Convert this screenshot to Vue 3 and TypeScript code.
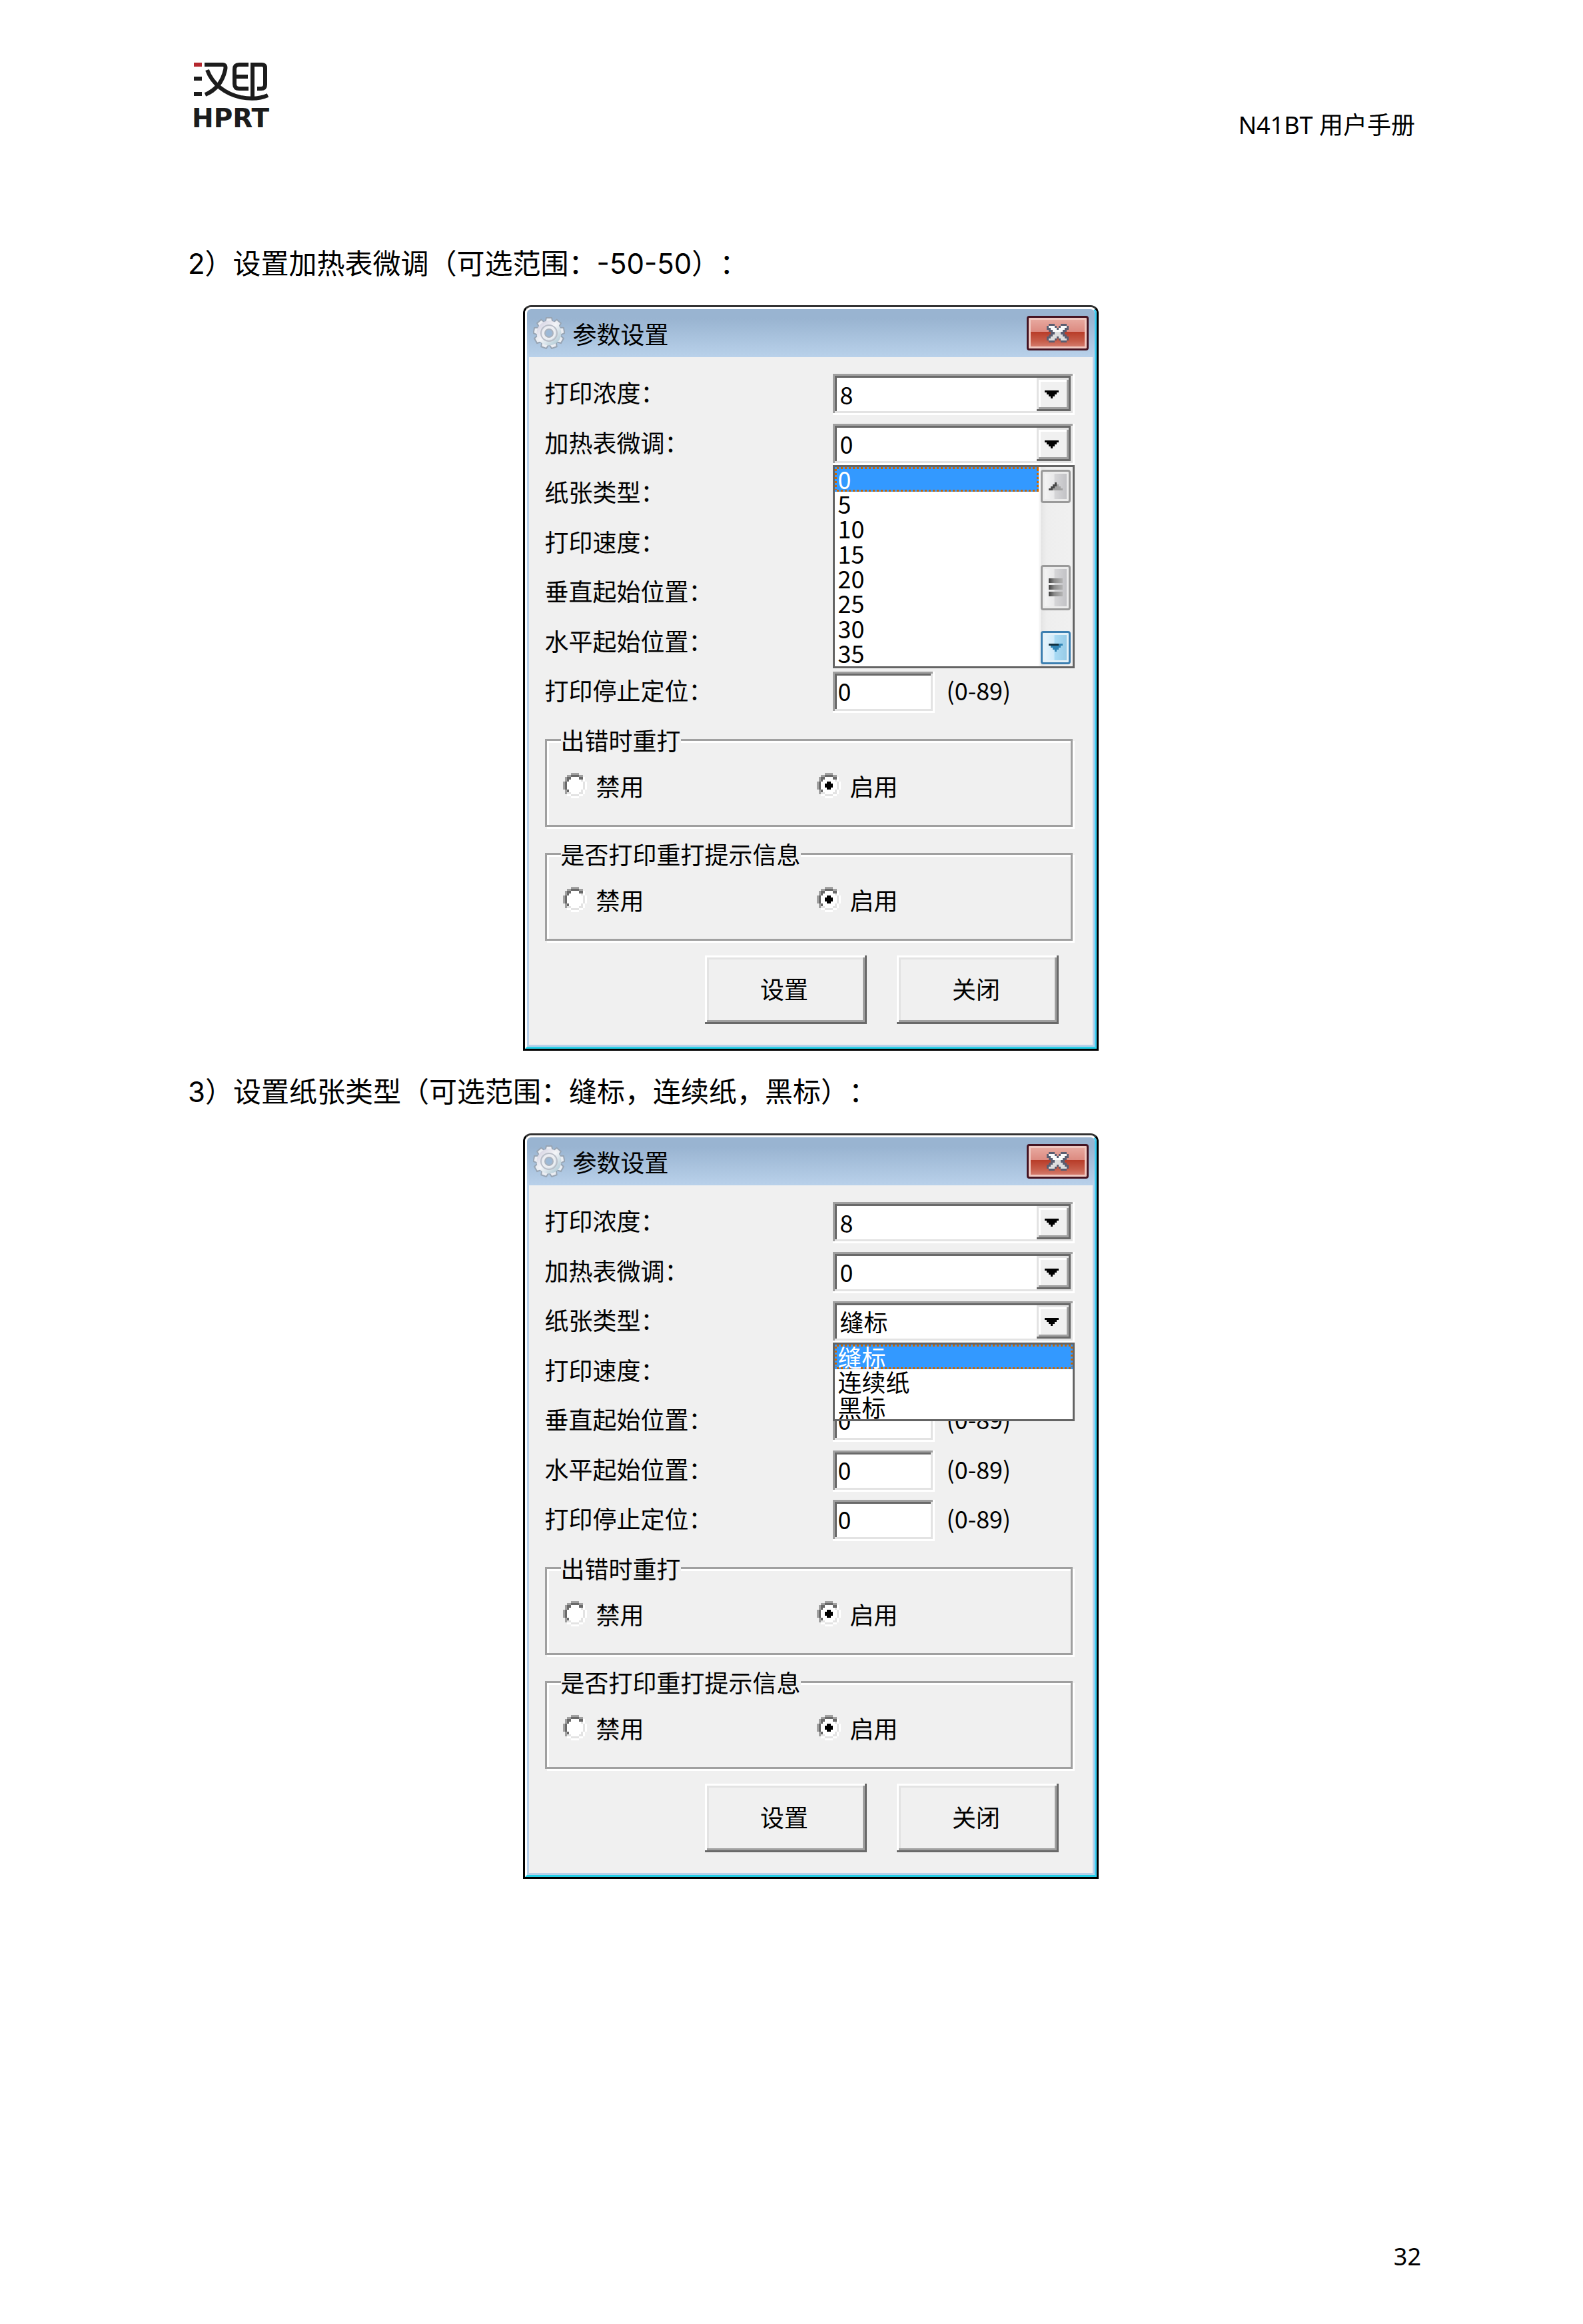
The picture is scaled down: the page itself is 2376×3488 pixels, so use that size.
<script setup lang="ts">
import { reactive } from 'vue'

interface Field {
  key: string
  label: string
  kind: 'select' | 'input'
  value: string
  options?: string[]
  open?: boolean
  covered?: boolean
  scroll?: boolean
}

interface Group {
  key: string
  legend: string
  value: string
}

interface Dialog {
  id: string
  heading: string
  fields: Field[]
  groups: Group[]
}

interface Cell {
  x: number
  y: number
  fill: string
}

const offsets = ['0', '5', '10', '15', '20', '25', '30', '35']
const papers = ['缝标', '连续纸', '黑标']

// Fields that lie entirely under an open list are hidden while it is open.
function makeDialog(id: string, heading: string, openKey: string, covered: string[]): Dialog {
  const fields: Field[] = [
    { key: 'density', label: '打印浓度：', kind: 'select', value: '8', options: ['8'] },
    { key: 'heat', label: '加热表微调：', kind: 'select', value: '0', options: offsets, scroll: true },
    { key: 'paper', label: '纸张类型：', kind: 'select', value: '缝标', options: papers },
    { key: 'speed', label: '打印速度：', kind: 'select', value: '', options: [] },
    { key: 'vertical', label: '垂直起始位置：', kind: 'input', value: '0' },
    { key: 'horizontal', label: '水平起始位置：', kind: 'input', value: '0' },
    { key: 'stop', label: '打印停止定位：', kind: 'input', value: '0' },
  ]
  return {
    id,
    heading,
    fields: fields.map((f) => ({ ...f, open: f.key === openKey, covered: covered.includes(f.key) })),
    groups: [
      { key: 'reprint', legend: '出错时重打', value: '启用' },
      { key: 'notice', legend: '是否打印重打提示信息', value: '启用' },
    ],
  }
}

const dialogs = reactive<Dialog[]>([
  makeDialog('d2', '2）设置加热表微调（可选范围：-50-50）：', 'heat', ['paper', 'speed', 'vertical', 'horizontal']),
  makeDialog('d3', '3）设置纸张类型（可选范围：缝标，连续纸，黑标）：', 'paper', ['speed']),
])

function toCells(rows: string[], palette: Record<string, string>): Cell[] {
  return rows.flatMap((row, y) =>
    [...row].flatMap((ch, x) => (palette[ch] ? [{ x, y, fill: palette[ch] }] : [])),
  )
}

const ring = toCells(
  [
    '    aaaa    ',
    '  aaddddaa  ',
    ' addwwwwddf ',
    ' adwwwwwwef ',
    'adwwwwwwwwef',
    'adwwwwwwwwef',
    'adwwwwwwwwef',
    'adwwwwwwwwef',
    ' adwwwwwwef ',
    ' aeewwwweef ',
    '  ffeeeeff  ',
    '    ffff    ',
  ],
  { a: '#a0a0a0', d: '#696969', w: '#ffffff', e: '#e3e3e3', f: '#ffffff' },
)

const cross = toCells(
  [
    ' ooo   ooo ',
    'owwwo owwwo',
    'oowwwowwwoo',
    ' oowwwwwoo ',
    '  oovvvoo  ',
    ' oovvvvvoo ',
    'oovvvovvvoo',
    'ovvvo ovvvo',
    ' ooo   ooo ',
  ],
  { o: '#5a5d70', w: '#fafafa', v: '#dedede' },
)

const teeth = Array.from({ length: 9 }, (_, i) => i * 40)
</script>

<template>
  <div class="page">
    <header class="top">
      <div class="brand">
        <svg class="mark" viewBox="0 0 118 62" aria-hidden="true">
          <rect x="2" y="1" width="12" height="6" fill="#b5282e" />
          <rect x="2" y="22" width="12" height="6" fill="#1c1c1c" />
          <rect x="2" y="45" width="12" height="6" fill="#1c1c1c" />
          <g fill="none" stroke="#1c1c1c" stroke-width="6">
            <path d="M18 4H45Q51 4 49 12C45 30 36 42 19 49" />
            <path d="M22 12C30 34 50 48 72 53C88 56 102 55 113 50" />
            <path d="M84 4H70Q63 4 63 11V33Q63 40 70 40H84M63 22H83" />
            <path d="M90 54V4H104Q109 4 109 9V34Q109 40 103 40H97" />
          </g>
        </svg>
        <span class="name">HPRT</span>
      </div>
      <span class="manual">N41BT 用户手册</span>
    </header>

    <main class="content">
      <section v-for="d in dialogs" :key="d.id" class="step">
        <h2 class="heading">{{ d.heading }}</h2>

        <div class="window" role="dialog" aria-label="参数设置">
          <div class="frame">
            <div class="titlebar">
              <svg class="gear" viewBox="-24 -24 48 48" aria-hidden="true">
                <defs>
                  <linearGradient :id="d.id + '-metal'" x1="0" y1="0" x2="1" y2="1">
                    <stop offset="0" stop-color="#d8d6e4" />
                    <stop offset="0.45" stop-color="#f4f5f8" />
                    <stop offset="1" stop-color="#b4cdd8" />
                  </linearGradient>
                </defs>
                <g stroke="#98a5b4" stroke-width="2">
                  <path
                    v-for="a in teeth"
                    :key="a"
                    d="M-6 -15L-4 -23H4L6 -15Z"
                    :transform="`rotate(${a})`"
                    fill="#eceef3"
                  />
                </g>
                <circle r="14" fill="none" :stroke="`url(#${d.id}-metal)`" stroke-width="9" />
                <circle r="12" fill="none" stroke="#b9bec8" stroke-width="2" />
                <circle r="8" fill="none" stroke="#eceef2" stroke-width="4" />
                <circle r="6" fill="#9db9d6" stroke="#a9b2be" stroke-width="2" />
              </svg>
              <span class="caption">参数设置</span>
              <button class="close" type="button" aria-label="关闭窗口">
                <svg viewBox="0 0 11 9" preserveAspectRatio="none" shape-rendering="crispEdges">
                  <rect v-for="(c, i) in cross" :key="i" :x="c.x" :y="c.y" width="1" height="1" :fill="c.fill" />
                </svg>
              </button>
            </div>

            <form class="body" @submit.prevent>
              <div class="rows">
                <div v-for="f in d.fields" :key="f.key" class="row">
                  <label class="label" :for="d.id + f.key">{{ f.label }}</label>

                  <div v-if="f.kind === 'select'" class="field" :class="{ covered: f.covered }">
                    <select :id="d.id + f.key" v-model="f.value" class="select sunken">
                      <option v-for="o in f.options" :key="o" :value="o">{{ o }}</option>
                    </select>
                    <span class="arrow">
                      <svg viewBox="0 0 7 4" preserveAspectRatio="none" shape-rendering="crispEdges">
                        <path d="M0 0H7V1H6V2H5V3H4V4H3V3H2V2H1V1H0Z" />
                      </svg>
                    </span>

                    <div v-if="f.open" class="popup">
                      <ul class="list" :class="{ tall: f.scroll }" role="listbox">
                        <li
                          v-for="o in f.options"
                          :key="o"
                          class="item"
                          :class="{ selected: o === f.value }"
                          role="option"
                          :aria-selected="o === f.value"
                          @click="f.value = o"
                        >{{ o }}</li>
                      </ul>
                      <div v-if="f.scroll" class="scrollbar" aria-hidden="true">
                        <span class="knob up">
                          <svg viewBox="0 0 7 4" shape-rendering="crispEdges">
                            <path d="M3 0H4V1H5V2H6V3H7V4H0V3H1V2H2V1H3Z" fill="#a2a2a2" />
                            <path d="M3 0H4V2H3V3H2V4H0V3H1V2H2V1H3Z" fill="#484848" />
                          </svg>
                        </span>
                        <span class="knob thumb"><i></i><i></i><i></i></span>
                        <span class="knob down">
                          <svg viewBox="0 0 7 4" shape-rendering="crispEdges">
                            <path d="M0 0H7V1H6V2H5V3H4V4H3V3H2V2H1V1H0Z" fill="#2f83b4" />
                            <path d="M0 0H5V1H0Z" fill="#12303f" />
                          </svg>
                        </span>
                      </div>
                    </div>
                  </div>

                  <div v-else class="field" :class="{ covered: f.covered }">
                    <input :id="d.id + f.key" v-model="f.value" class="text sunken" type="text" />
                    <span class="hint">(0-89)</span>
                  </div>
                </div>
              </div>

              <fieldset v-for="g in d.groups" :key="g.key" class="group">
                <legend>{{ g.legend }}</legend>
                <div class="choices">
                  <label v-for="c in ['禁用', '启用']" :key="c" class="choice">
                    <input v-model="g.value" type="radio" :name="d.id + g.key" :value="c" />
                    <svg viewBox="0 0 12 12" preserveAspectRatio="none" shape-rendering="crispEdges" aria-hidden="true">
                      <rect v-for="(p, i) in ring" :key="i" :x="p.x" :y="p.y" width="1" height="1" :fill="p.fill" />
                      <path v-if="g.value === c" d="M5 4H7V5H8V7H7V8H5V7H4V5H5Z" />
                    </svg>
                    <span>{{ c }}</span>
                  </label>
                </div>
              </fieldset>

              <div class="actions">
                <button class="push" type="submit">设置</button>
                <button class="push" type="button">关闭</button>
              </div>
            </form>
          </div>
        </div>
      </section>
    </main>

    <footer class="bottom">32</footer>
  </div>
</template>

<style>
body {
  margin: 0;
  background: #ffffff;
}
</style>

<style scoped>
* {
  box-sizing: border-box;
}

.page {
  display: flex;
  flex-direction: column;
  min-height: 100vh;
  color: #000000;
  font-family: 'Noto Sans', 'Noto Sans CJK SC', sans-serif;
  font-size: 36px;
}

.top {
  display: flex;
  justify-content: space-between;
  align-items: flex-end;
  padding: 93px 252px 0 288px;
}

.brand {
  display: flex;
  flex-direction: column;
  gap: 8px;
  width: 120px;
}

.mark {
  display: block;
  width: 120px;
  height: 62px;
}

.name {
  color: #1c1c1c;
  font: 700 39px/30px 'DejaVu Sans', sans-serif;
}

.manual {
  line-height: 10px;
}

.content {
  display: flex;
  flex-direction: column;
  gap: 30px;
  flex: 1;
  padding: 171px 225px 0 282px;
}

.step {
  display: flex;
  flex-direction: column;
  gap: 30px;
}

.heading {
  margin: 0;
  font: 400 42px/64px Inter, 'Noto Sans CJK SC', sans-serif;
  text-spacing-trim: space-all;
}

.window {
  align-self: center;
  width: 864px;
  border: 3px solid #000000;
  border-top-color: #333333;
  border-radius: 12px 12px 0 0;
  font-family: 'Noto Sans CJK SC', sans-serif;
}

.frame {
  border: 3px solid #ffffff;
  border-right-color: #3ccdf2;
  border-bottom-color: #25cfe6;
  border-radius: 9px 9px 0 0;
}

.titlebar {
  display: flex;
  align-items: center;
  height: 72px;
  padding: 0 9px;
  border-radius: 6px 6px 0 0;
  background: linear-gradient(#99b4d1 0 20%, #b9d1ea);
}

.gear {
  width: 48px;
  height: 48px;
}

.caption {
  margin-left: 12px;
  line-height: 36px;
}

.close {
  display: flex;
  justify-content: center;
  align-items: center;
  width: 93px;
  height: 52px;
  margin-left: auto;
  padding: 0;
  border: 3px solid #451422;
  border-radius: 4px;
  background: linear-gradient(#e9aca3, #dc8a80 46%, #b83c28 46%, #c65c49 75%, #d98477);
  box-shadow: inset 0 0 0 3px #f0c8c1;
}

.close svg {
  width: 33px;
  height: 28px;
}

.body {
  display: flex;
  flex-direction: column;
  gap: 22px;
  padding: 25px 27px 31px 24px;
  border: 3px solid #b9d1ea;
  border-top: 0;
  background: #f0f0f0;
}

.rows {
  display: flex;
  flex-direction: column;
  justify-content: space-between;
  height: 509px;
}

.row {
  display: flex;
  justify-content: space-between;
}

.label {
  line-height: 54px;
}

.field {
  display: flex;
  position: relative;
  width: 363px;
  height: 62px;
}

.covered {
  visibility: hidden;
}

.sunken {
  height: 62px;
  margin: 0;
  border: 0;
  border-radius: 0;
  outline: 0;
  background: #ffffff;
  color: #000000;
  font: 400 36px/36px 'Noto Sans CJK SC', sans-serif;
  box-shadow:
    inset -3px -3px 0 #ffffff,
    inset 3px 3px 0 #a0a0a0,
    inset -6px -6px 0 #e3e3e3,
    inset 6px 6px 0 #696969;
}

.select {
  appearance: none;
  width: 100%;
  padding: 0 60px 3px 11px;
}

.arrow {
  position: absolute;
  top: 6px;
  right: 6px;
  display: flex;
  justify-content: center;
  align-items: center;
  width: 51px;
  height: 50px;
  padding-right: 6px;
  background: #f0f0f0;
  pointer-events: none;
  box-shadow:
    inset -3px -3px 0 #696969,
    inset 3px 3px 0 #e3e3e3,
    inset -6px -6px 0 #a0a0a0,
    inset 6px 6px 0 #ffffff;
}

.arrow svg {
  width: 21px;
  height: 12px;
}

.text {
  width: 153px;
  padding: 0 9px 6px 8px;
}

.hint {
  margin-left: 18px;
  line-height: 54px;
}

.popup {
  position: absolute;
  top: 100%;
  left: 0;
  z-index: 2;
  display: flex;
  width: 100%;
  border: 3px solid #646464;
  background: #ffffff;
}

.list {
  display: grid;
  grid-auto-rows: 1fr;
  flex: 1;
  height: 112px;
  margin: 0;
  padding: 0;
  list-style: none;
}

.tall {
  height: 299px;
}

.item {
  min-height: 0;
  padding-left: 5px;
  line-height: 36px;
}

.tall .item {
  line-height: 34px;
}

.selected {
  color: #ffffff;
  background:
    repeating-linear-gradient(90deg, #3399ff 0 3px, #cc6600 3px 6px) top / 100% 3px no-repeat,
    repeating-linear-gradient(90deg, #3399ff 0 3px, #cc6600 3px 6px) bottom / 100% 3px no-repeat,
    repeating-linear-gradient(#3399ff 0 3px, #cc6600 3px 6px) left / 3px 100% no-repeat,
    repeating-linear-gradient(#3399ff 0 3px, #cc6600 3px 6px) right / 3px 100% no-repeat,
    #3399ff;
}

.scrollbar {
  display: flex;
  flex-direction: column;
  width: 51px;
  padding: 4px 3px 3px;
  background: linear-gradient(90deg, #f6f6f6 0 3px, #e4e4e4 3px, #eeeeee 12px, #f0f0f0);
}

.knob {
  display: flex;
  flex-direction: column;
  justify-content: center;
  align-items: center;
  height: 50px;
  border: 3px solid #9a9a9a;
  border-radius: 4px;
  background: linear-gradient(90deg, #f6f6f6, #e8e8e9 44%, #d6d6d8 46%, #bfbfc3);
  box-shadow: inset 0 0 0 3px #ececec;
}

.knob svg {
  width: 21px;
  height: 12px;
}

.thumb {
  gap: 3px;
  height: 68px;
  margin-top: 93px;
}

.thumb i {
  width: 21px;
  height: 7px;
  background: linear-gradient(90deg, #404040, #8a8a8a 40%, #b4b4b4);
}

.down {
  margin-top: auto;
  border-color: #3c7fb1;
  background: linear-gradient(90deg, #e8f5fc, #cfeafa 44%, #a9dbf5 46%, #95c8e4);
  box-shadow: inset 0 0 0 3px #e4f1f8;
}

.group {
  min-width: 0;
  height: 149px;
  margin: 0 3px 0 0;
  padding: 0 21px;
  border: 3px solid #a0a0a0;
  box-shadow:
    3px 3px 0 #ffffff,
    inset 3px 3px 0 #ffffff;
}

.group legend {
  padding: 0;
  background: #f0f0f0;
  line-height: 36px;
}

.choices {
  display: grid;
  grid-template-columns: 381px 1fr;
  padding: 32px 3px 0;
}

.choice {
  display: flex;
  align-items: center;
  gap: 14px;
  position: relative;
  height: 38px;
  line-height: 38px;
}

.choice input {
  position: absolute;
  width: 36px;
  height: 38px;
  margin: 0;
  opacity: 0;
}

.choice svg {
  width: 36px;
  height: 38px;
}

.actions {
  display: flex;
  justify-content: flex-end;
  gap: 45px;
  padding-right: 24px;
}

.push {
  width: 243px;
  height: 103px;
  padding: 0 4px 6px 0;
  border: 0;
  border-radius: 0;
  background: #f0f0f0;
  color: #000000;
  font: 400 36px/36px 'Noto Sans CJK SC', sans-serif;
  box-shadow:
    inset -3px -3px 0 #696969,
    inset 3px 3px 0 #ffffff,
    inset -6px -6px 0 #a0a0a0,
    inset 6px 6px 0 #e3e3e3;
}

.bottom {
  padding: 0 243px 76px 0;
  line-height: 50px;
  text-align: right;
}
</style>
